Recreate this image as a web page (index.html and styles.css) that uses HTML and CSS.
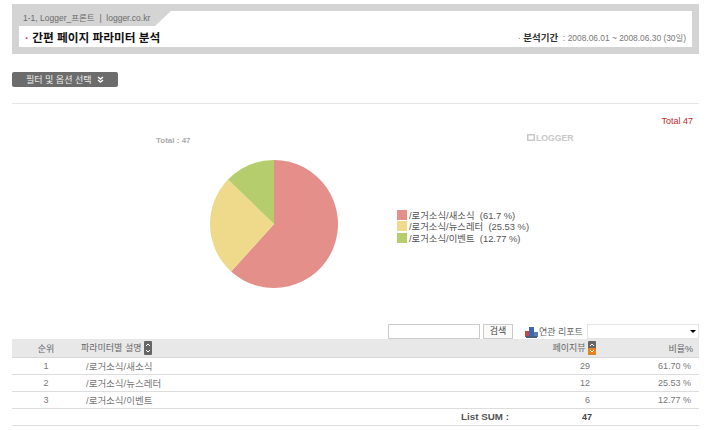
FILE: index.html
```html
<!DOCTYPE html>
<html lang="ko">
<head>
    <meta charset="UTF-8">
    <meta name="viewport" content="width=device-width, initial-scale=1.0">
    <title>간편 페이지 파라미터 분석</title>
    <link rel="stylesheet" href="styles.css">
</head>
<body>
    <header class="title-box">
        <div class="crumb-row">
            <div class="crumb">1-1, Logger_프론트 &nbsp;|&nbsp; logger.co.kr</div>
            <svg class="crumb-cut" width="16" height="15" viewBox="0 0 16 15"><path d="M0 0H16L0 15Z" fill="#d4d4d4"/></svg>
            <div class="crumb-fill"></div>
        </div>
        <div class="title-row">
            <h1><span class="dot">·</span> 간편 페이지 파라미터 분석</h1>
            <p class="period"><span class="dot-gray">·</span> <b>분석기간</b> : <span class="period-date">2008.06.01 ~ 2008.06.30 (30일)</span></p>
        </div>
    </header>

    <button class="filter-btn" type="button">필터 및 옵션 선택 <svg width="7" height="7" viewBox="0 0 7 7"><path d="M1 1L3.5 3L6 1M1 4L3.5 6L6 4" fill="none" stroke="#fff" stroke-width="1.4"/></svg></button>

    <section class="chart-box">
        <div class="total-red">Total 47</div>
        <div class="chart">
            <span class="chart-total">Total : 47</span>
            <span class="chart-logo"><svg width="8" height="7" viewBox="0 0 8 7"><rect x=".75" y=".75" width="6.5" height="5.5" fill="none" stroke="#c8c8c8" stroke-width="1.5"/></svg>LOGGER</span>
            <svg class="pie" width="130" height="130" viewBox="0 0 130 130">
                <path d="M65 65V1A64 64 0 1 1 22.1 112.5Z" fill="#e58f8b"/>
                <path d="M65 65L22.1 112.5A64 64 0 0 1 19 20.5Z" fill="#efda8c"/>
                <path d="M65 65L19 20.5A64 64 0 0 1 65 1Z" fill="#b5cd6d"/>
            </svg>
            <ul class="legend">
                <li><i class="swatch swatch-red"></i>/로거소식/새소식 &nbsp;(61.7 %)</li>
                <li><i class="swatch swatch-yellow"></i>/로거소식/뉴스레터 &nbsp;(25.53 %)</li>
                <li><i class="swatch swatch-green"></i>/로거소식/이벤트 &nbsp;(12.77 %)</li>
            </ul>
        </div>
    </section>

    <div class="tools">
        <input class="search-input" type="text">
        <button class="search-btn" type="button">검색</button>
        <svg class="report-icon" width="13" height="12" viewBox="0 0 13 12">
            <rect x="0" y="5" width="4" height="6" fill="#c8453c"/>
            <rect x="4" y="1" width="5" height="10" fill="#3d66b5"/>
            <rect x="9" y="6" width="4" height="5" fill="#5c7fa8"/>
            <rect x="1" y="10" width="11" height="2" fill="#45607a"/>
        </svg>
        <span class="report-label">연관 리포트</span>
        <div class="select-box"><i class="select-arrow"></i></div>
    </div>

    <table class="data-table">
        <thead>
            <tr>
                <th class="col-rank">순위</th>
                <th class="col-name">파라미터별 설명 <svg class="sort" width="8" height="14" viewBox="0 0 8 14"><rect width="8" height="14" rx="1" fill="#666"/><path d="M2 5L4 3L6 5M2 9L4 11L6 9" fill="none" stroke="#fff"/></svg></th>
                <th class="col-view">페이지뷰 <svg class="sort" width="8" height="14" viewBox="0 0 8 14"><rect width="8" height="14" rx="1" fill="#666"/><rect y="7" width="8" height="7" rx="1" fill="#e8831e"/><path d="M2 5L4 3L6 5M2 9L4 11L6 9" fill="none" stroke="#fff"/></svg></th>
                <th class="col-rate">비율%</th>
            </tr>
        </thead>
        <tbody>
            <tr><td class="col-rank">1</td><td class="col-name">/로거소식/새소식</td><td class="col-view">29</td><td class="col-rate">61.70 %</td></tr>
            <tr><td class="col-rank">2</td><td class="col-name">/로거소식/뉴스레터</td><td class="col-view">12</td><td class="col-rate">25.53 %</td></tr>
            <tr><td class="col-rank">3</td><td class="col-name">/로거소식/이벤트</td><td class="col-view">6</td><td class="col-rate">12.77 %</td></tr>
        </tbody>
        <tfoot>
            <tr><td colspan="2" class="sum-label">List SUM :</td><td class="col-view sum-value">47</td><td></td></tr>
        </tfoot>
    </table>
</body>
</html>
```

FILE: styles.css
```css
body { margin: 0; padding: 4px 11px 0 12px; background-color: #fff; color: #666; font-family: "Liberation Sans", "Noto Sans CJK KR", sans-serif; font-size: 9px; overflow: hidden; }

.title-box { background-color: #d4d4d4; padding: 7px; height: 36px; }
.crumb-row { display: flex; height: 15px; }
.crumb { width: 132px; padding: 1px 0 0 4px; font-size: 8.5px; line-height: 12px; color: #6a6a6a; white-space: nowrap; }
.crumb-cut { background-color: #fff; }
.crumb-fill { flex: 1; background-color: #fff; }
.title-row { display: flex; justify-content: space-between; align-items: center; height: 21px; background-color: #fff; padding: 0 6px 0 6px; }
.title-row h1 { margin: 0; font-size: 11.7px; color: #111; font-weight: bold; }
.dot { color: #e03a5a; }
.period { margin: 0; font-size: 9px; color: #777; }
.period b { margin-right: 2px; font-size: 9.5px; color: #333; }
.period-date { font-size: 8.4px; }
.dot-gray { color: #777; }

.filter-btn { display: block; margin: 18px 0 0; width: 106px; height: 15px; padding: 0; border: 0; border-radius: 2px; background-color: #6c6c6c; color: #eee; font-family: "Noto Sans CJK KR", sans-serif; font-size: 9px; line-height: 15px; }
.filter-btn svg { margin-left: 3px; }

.chart-box { margin-top: 16px; height: 220px; border-top: 1px solid #e6e6e6; }
.total-red { padding: 11px 6px 0 0; text-align: right; font-size: 9px; line-height: 12px; color: #c22a2a; }
.chart { position: relative; height: 197px; }
.chart-total { position: absolute; left: 144px; top: 9px; font-weight: bold; color: #aaa; font-size: 8px; }
.chart-logo { position: absolute; left: 515px; top: 6px; font-weight: bold; font-size: 8.7px; color: #c8c8c8; }
.chart-logo svg { margin-right: 1px; }
.pie { position: absolute; left: 197px; top: 32px; }
.legend { position: absolute; left: 385px; top: 82px; margin: 0; padding: 0; list-style: none; font-size: 9.4px; color: #555; }
.legend li { display: flex; align-items: center; height: 11.5px; white-space: pre; }
.swatch { width: 10px; height: 10px; margin-right: 2px; }
.swatch-red { background-color: #e58f8b; }
.swatch-yellow { background-color: #efda8c; }
.swatch-green { background-color: #b5cd6d; }

.tools { display: flex; justify-content: flex-end; align-items: center; height: 15px; }
.search-input { width: 92px; height: 15px; box-sizing: border-box; margin: 0; border: 1px solid #ccc; padding: 0; }
.search-btn { width: 30px; height: 15px; margin-left: 3px; padding: 0; border: 1px solid #ccc; background-color: #fafafa; color: #444; font-family: "Liberation Sans", "Noto Sans CJK KR", sans-serif; font-size: 9px; line-height: 13px; }
.report-icon { margin-left: 12px; }
.report-label { width: 46px; margin-left: 1px; color: #666; white-space: nowrap; }
.select-box { position: relative; width: 112px; height: 15px; box-sizing: border-box; margin-left: 2px; border: 1px solid #e4e4e4; background-color: #fff; }
.select-arrow { position: absolute; right: 2px; top: 5px; border: 3px solid transparent; border-top: 3px solid #000; border-bottom: 0; }

.data-table { width: 687px; border-collapse: collapse; table-layout: fixed; font-size: 9px; color: #777; }
.data-table th { height: 18px; padding: 0; background-color: #e8e8e8; border-bottom: 1px solid #d8d8d8; font-weight: normal; color: #666; }
.data-table td { height: 15px; padding: 0 0 1px; border-bottom: 1px solid #ddd; }
.col-rank { width: 68px; text-align: center; }
.data-table .col-name { width: 439px; text-align: left; padding-left: 6px; box-sizing: border-box; font-size: 9.5px; }
.data-table th.col-name { padding-left: 1px; font-size: 9px; }
.col-view { width: 80px; text-align: right; }
.data-table td.col-view { padding-right: 9px; box-sizing: border-box; }
.data-table th.col-view { padding-right: 3px; box-sizing: border-box; }
.col-rate { width: 100px; text-align: right; }
.data-table td.col-rate { padding-right: 8px; box-sizing: border-box; }
.data-table th.col-rate { padding-right: 6px; box-sizing: border-box; }
.sort { vertical-align: middle; }
.data-table td.sum-label { padding-right: 10px; text-align: right; font-size: 9.8px; font-weight: bold; color: #555; }
.data-table td.sum-value { padding-right: 7px; font-weight: bold; color: #444; }
```
